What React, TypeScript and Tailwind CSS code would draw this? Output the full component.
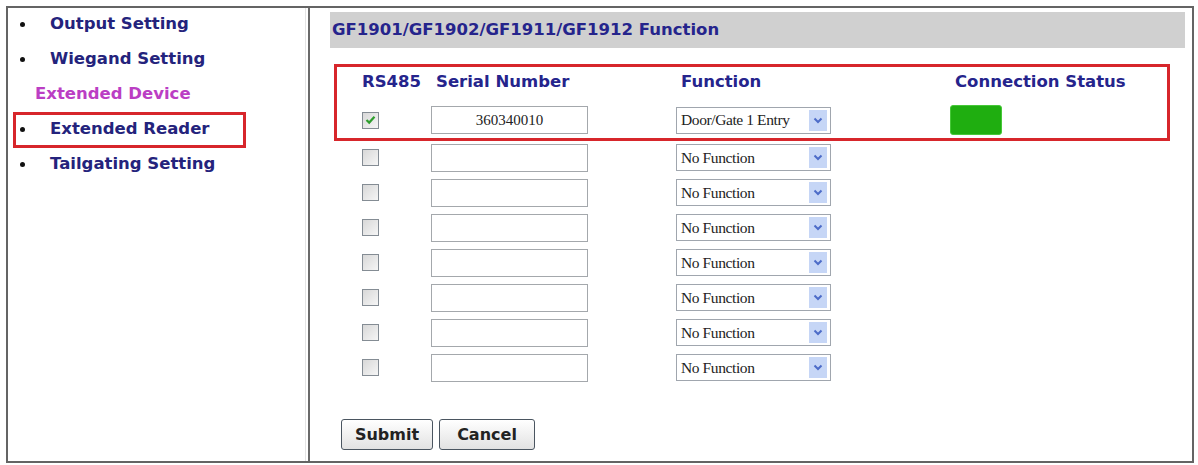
import React from "react";

const sans = "font-['DejaVu_Sans',Verdana,sans-serif]";
const serif = "font-['Liberation_Serif','Times_New_Roman',serif]";

function Checkbox({ checked }: { checked?: boolean }) {
  return (
    <div className="w-[17px] h-[17px] border border-[#848c94] bg-gradient-to-br from-[#d8d8d8] to-[#f6f6f6] flex items-center justify-center">
      {checked && (
        <svg width="11" height="10" viewBox="0 0 11 10">
          <path d="M1.5 5 L4.2 7.6 L9.5 1.8" fill="none" stroke="#2e9e2e" strokeWidth="2.2" />
        </svg>
      )}
    </div>
  );
}

function TextBox({ value }: { value?: string }) {
  return (
    <div className={`w-[157px] h-[28px] border border-[#a4a8ac] bg-white flex items-center justify-center text-[15px] text-[#222] ${serif}`}>
      {value}
    </div>
  );
}

function Select({ value }: { value: string }) {
  return (
    <div className="w-[155px] h-[27px] border border-[#a0a6ae] bg-white flex items-center">
      <span className={`flex-1 pl-[4px] text-[15.5px] text-[#222] tracking-[-0.4px] ${serif}`}>{value}</span>
      <div className="w-[18px] h-[21px] mr-[3px] bg-[#c6d6f6] flex items-center justify-center">
        <svg width="10" height="7" viewBox="0 0 10 7">
          <path d="M1.5 1.5 L5 5 L8.5 1.5" fill="none" stroke="#4d6cc8" strokeWidth="2" />
        </svg>
      </div>
    </div>
  );
}

function Row({ first, checked, serialNo, fn, status, h }: { first?: boolean; checked?: boolean; serialNo?: string; fn: string; status?: boolean; h: string }) {
  return (
    <div className={`grid grid-cols-[69px_245px_274px_1fr] items-center ${h}`}>
      <div className="flex items-center">
        <Checkbox checked={checked} />
      </div>
      <div>
        <TextBox value={serialNo} />
      </div>
      <div>
        <Select value={fn} />
      </div>
      <div>
        {status && first && (
          <div className="w-[52px] h-[30px] rounded-[3px] bg-[#1fae10] border border-[#46c838]" />
        )}
      </div>
    </div>
  );
}

export default function App() {
  const menu = (label: string) => (
    <div className="h-[35px] flex items-center">
      <div className="w-[5px] h-[5px] rounded-full bg-[#111] ml-[12px]" />
      <span className="ml-[25px] text-[#24237c] text-[16.5px] font-bold">{label}</span>
    </div>
  );
  return (
    <div className={`w-[1198px] h-[465px] bg-white pt-[6px] pl-[6px] ${sans}`}>
      <div className="w-[1188px] h-[457px] border-2 border-[#646464] flex">
        {/* Left panel */}
        <div className="relative w-[302px] h-full border-r-2 border-[#6a6a6a] shrink-0">
          <div className="absolute right-[2px] top-0 bottom-0 w-[1px] bg-[#e4e4e4]" />
          <div className="flex flex-col mt-[-1px]">
            {menu("Output Setting")}
            {menu("Wiegand Setting")}
            <div className="h-[35px] flex items-center">
              <span className="ml-[27px] text-[#bb3ec4] text-[16.5px] font-bold">Extended Device</span>
            </div>
            {menu("Extended Reader")}
            {menu("Tailgating Setting")}
          </div>
          <div className="absolute left-[5px] top-[104px] w-[233px] h-[36px] border-[3px] border-[#d7262b]" />
        </div>

        {/* Right panel */}
        <div className="relative flex-1 h-full">
          <div className="ml-[20px] mr-[7px] mt-[4px] h-[36px] bg-[#d0d0d0] flex items-center">
            <span className="ml-[2px] text-[#25248c] text-[16.5px] font-bold">GF1901/GF1902/GF1911/GF1912 Function</span>
          </div>

          <div className="ml-[52px] mt-[16px]">
            <div className="grid grid-cols-[69px_245px_274px_1fr] items-center h-[36px] text-[#25248c] text-[16.5px] font-bold">
              <span>RS485</span>
              <span className="ml-[5px]">Serial Number</span>
              <span className="ml-[5px]">Function</span>
              <span className="ml-[5px]">Connection Status</span>
            </div>
            <Row first checked serialNo="360340010" fn="Door/Gate 1 Entry" status h="h-[40px]" />
            {Array.from({ length: 7 }).map((_, i) => (
              <Row key={i} fn="No Function" h="h-[35px]" />
            ))}
          </div>

          <div className="ml-[31px] mt-[34px] flex gap-[6px]">
            <button className="w-[92px] h-[31px] border-[1.5px] border-[#4a5560] rounded-[3px] bg-gradient-to-b from-white to-[#e2e2e2] text-[16px] font-bold text-[#222]">
              Submit
            </button>
            <button className="w-[96px] h-[31px] border-[1.5px] border-[#4a5560] rounded-[3px] bg-gradient-to-b from-white to-[#e2e2e2] text-[16px] font-bold text-[#222]">
              Cancel
            </button>
          </div>

          <div className="absolute left-[24px] top-[56px] w-[836px] h-[77px] border-[3px] border-[#d7262b]" />
        </div>
      </div>
    </div>
  );
}
